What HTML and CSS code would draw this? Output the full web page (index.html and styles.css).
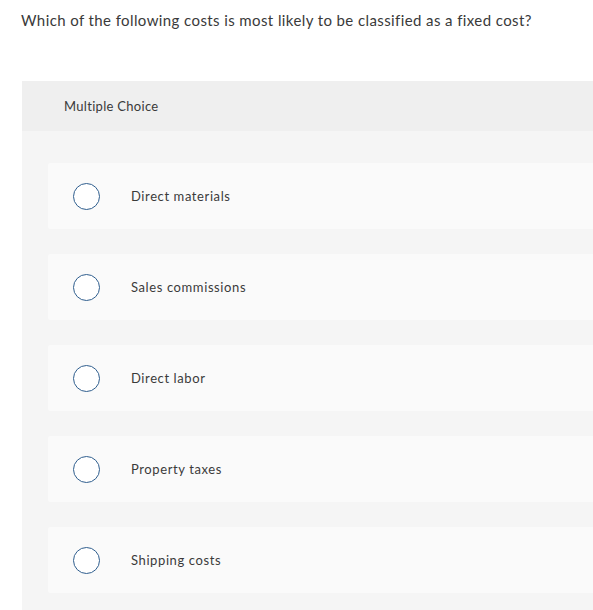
FILE: index.html
```html
<!DOCTYPE html>
<html>
<head>
<meta charset="utf-8">
<link rel="stylesheet" href="styles.css">
</head>
<body>
<div class="page">
  <p class="question">Which of the following costs is most likely to be classified as a fixed cost?</p>
  <div class="panel">
    <div class="panel-head">Multiple Choice</div>
    <div class="options">
      <div class="option"><span class="radio"></span><span class="label">Direct materials</span></div>
      <div class="option"><span class="radio"></span><span class="label">Sales commissions</span></div>
      <div class="option"><span class="radio"></span><span class="label">Direct labor</span></div>
      <div class="option"><span class="radio"></span><span class="label">Property taxes</span></div>
      <div class="option"><span class="radio"></span><span class="label">Shipping costs</span></div>
    </div>
  </div>
</div>
</body>
</html>
```
FILE: styles.css
```css
html, body {
  margin: 0;
  padding: 0;
  background: #ffffff;
  overflow: hidden;
}
.page {
  font-family: Lato, "Open Sans", sans-serif;
  color: #3a3a3a;
  padding-top: 10px;
  font-variant-ligatures: none;
}
.question {
  margin: 0 0 0 21px;
  font-size: 15px;
  line-height: 20px;
  letter-spacing: 0.4px;
  color: #3a3a3a;
}
.panel {
  margin-top: 51px;
  margin-left: 22px;
  width: 640px;
  background: #f5f5f5;
  height: 540px;
}
.panel-head {
  background: #efefef;
  height: 50px;
  display: flex;
  align-items: center;
  padding-left: 42px;
  font-size: 13px;
  letter-spacing: 0.3px;
  color: #3a3a3a;
}
.options {
  display: flex;
  flex-direction: column;
  gap: 25px;
  padding: 32px 0 0 26px;
}
.option {
  background: #fafafa;
  height: 66px;
  display: flex;
  align-items: center;
  border-radius: 2px;
}
.radio {
  width: 25px;
  height: 25px;
  border: 1.5px solid #2f5e8e;
  border-radius: 50%;
  background: #ffffff;
  margin-left: 25px;
  flex: none;
}
.label {
  margin-left: 31px;
  font-size: 13px;
  letter-spacing: 0.6px;
  color: #3a3a3a;
}
```
